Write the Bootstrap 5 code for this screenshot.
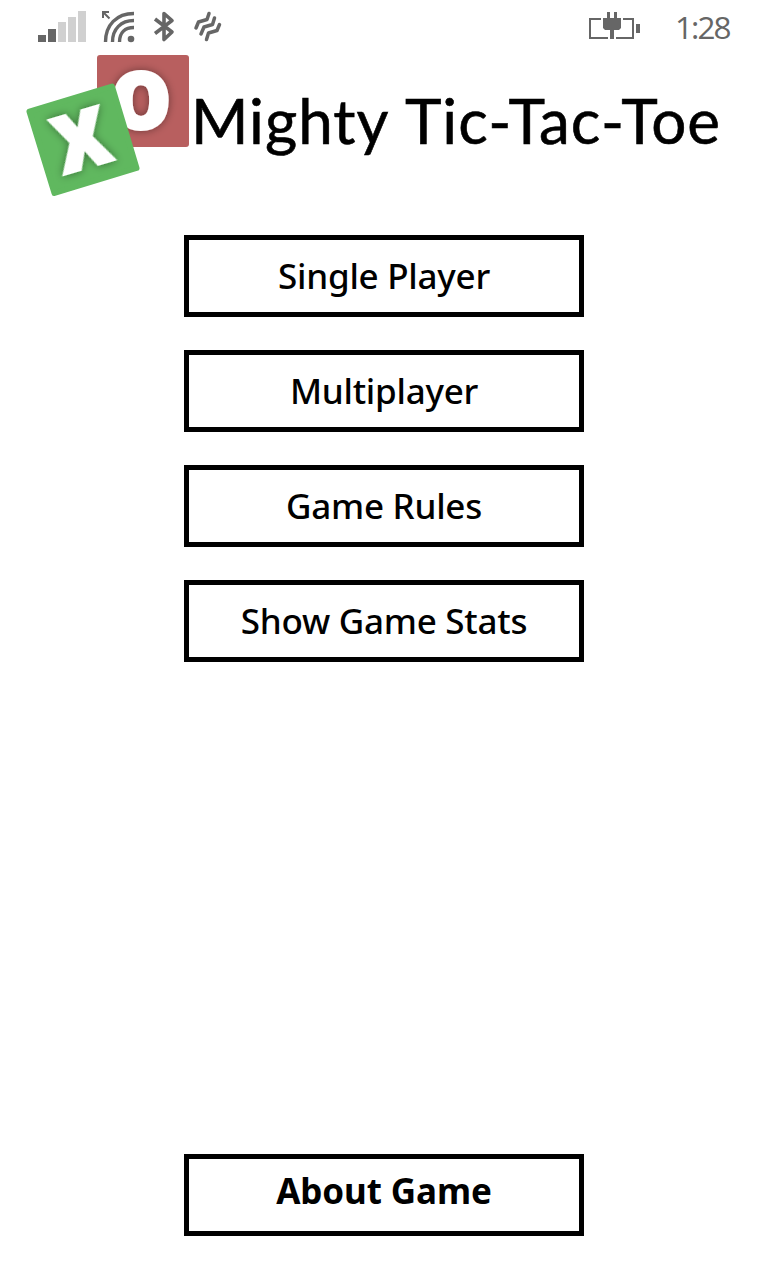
<!DOCTYPE html>
<html lang="en">
<head>
<meta charset="utf-8">
<meta name="viewport" content="width=device-width, initial-scale=1">
<title>Mighty Tic-Tac-Toe</title>
<link href="https://cdn.jsdelivr.net/npm/bootstrap@5.3.0/dist/css/bootstrap.min.css" rel="stylesheet">
<style>
body { font-family: "Noto Sans", "Open Sans", sans-serif; background: #fff; color: #000; }
.screen { width: 768px; height: 1280px; overflow: hidden; }
.status-bar { height: 50px; padding: 0 39px 0 36px; color: #666; }
.clock { font: 400 31.5px/50px "Open Sans", sans-serif; letter-spacing: -1.9px; padding-top: 2px; margin-left: 33px; width: 54px; white-space: nowrap; }
.title-bar { height: 185px; padding-left: 20px; }
.logo { overflow: visible; }
.logo-letter { font-family: "Open Sans", sans-serif; font-weight: 800; font-size: 106px; fill: #fff; }
.game-title { font: 400 62px/80px Lato, sans-serif; letter-spacing: .98px; word-spacing: 2px; -webkit-text-stroke: .6px #000; color: #000; margin: 30px 0 0 -1px; white-space: nowrap; }
.menu { gap: 33px; }
.btn-menu { width: 400px; height: 82px; border: 5px solid #000; border-radius: 0; padding: 0; color: #000; font-size: 35px; font-weight: 500; line-height: 72px; letter-spacing: -.25px; white-space: nowrap; display: flex; justify-content: center; align-items: flex-start; }
.btn-about { font-weight: 700; line-height: 64px; margin-bottom: 44px; letter-spacing: -.1px; }
</style>
</head>
<body>
<div class="screen d-flex flex-column">
  <header class="status-bar d-flex align-items-start flex-shrink-0">
    <svg width="190" height="50" viewBox="36 0 190 50" fill="none" stroke="#666" aria-label="Signal, Wi-Fi, Bluetooth, vibrate">
      <g stroke="none"><path fill="#666" d="M38 35h8v7h-8zM48 29h8v13h-8z"/><path fill="#d0d0d0" d="M58 22h8v20h-8zM68 17h8v25h-8zM78 11h8v31h-8z"/></g>
      <g stroke-width="3.400"><path d="M105.500 42c0-17 11-28.500 28.500-28.500M112.500 42c0-13 8.500-21.500 21.500-21.500M119.500 42c0-9.500 5.500-14.500 14.500-14.500" /></g>
      <circle cx="131" cy="39" r="3.300" fill="#666" stroke="none"/>
      <path d="M109.500 18.500l-6-6M102 12h7M103 11v7" stroke-width="2"/>
      <path d="M155 19l17 13-8 7.500V13.500l8 7-17 13" stroke-width="3.600" stroke-linejoin="round"/>
      <g stroke-width="3.500" stroke-linecap="round" stroke-linejoin="round"><path d="M196 28l2.500-6 8.500-2.500 2-6M201 34l3-7 8.500-2.500 2-6.500M206.500 39.500l2-6.500 8.500-2.500 2.500-6"/></g>
    </svg>
    <svg class="ms-auto" width="54" height="50" viewBox="588 0 54 50" aria-label="Charging">
      <path d="M601 19H590V38H608M616 38H633V19H623" fill="none" stroke="#666" stroke-width="2"/>
      <path fill="#666" d="M636 24h4v9h-4zM607 12h3v6h4v-6h3v6h4v10l-2 2h-5v9h-4v-9h-5l-2-2V18h4z"/>
    </svg>
    <div class="clock">1:28</div>
  </header>

  <div class="title-bar d-flex align-items-start flex-shrink-0">
    <svg class="logo flex-shrink-0" width="172" height="150" viewBox="20 50 172 150" aria-label="XO">
      <defs><filter id="glow" x="-40%" y="-40%" width="180%" height="180%"><feDropShadow dx="0" dy="0" stdDeviation="4.500" flood-color="#000" flood-opacity=".42"/></filter></defs>
      <rect x="97" y="55" width="92" height="92" rx="3" fill="#b85f5f"/>
      <text class="logo-letter" filter="url(#glow)" x="109" y="129.500" textLength="64" lengthAdjust="spacingAndGlyphs">o</text>
      <path fill="#60b85f" stroke="#60b85f" stroke-width="6" stroke-linejoin="round" d="M29.500 111.500L112 86.500 136.500 168 54.500 193Z"/>
      <g transform="translate(81.500 140.500) rotate(-16.500)"><text class="logo-letter" filter="url(#glow)" x="-29" y="29" textLength="58" lengthAdjust="spacingAndGlyphs">x</text></g>
    </svg>
    <h1 class="game-title">Mighty Tic-Tac-Toe</h1>
  </div>

  <nav class="menu d-flex flex-column align-items-center">
    <button class="btn btn-menu">Single Player</button>
    <button class="btn btn-menu">Multiplayer</button>
    <button class="btn btn-menu">Game Rules</button>
    <button class="btn btn-menu">Show Game Stats</button>
  </nav>

  <button class="btn btn-menu btn-about mt-auto mx-auto">About Game</button>
</div>
<script src="https://cdn.jsdelivr.net/npm/bootstrap@5.3.0/dist/js/bootstrap.bundle.min.js"></script>
</body>
</html>
